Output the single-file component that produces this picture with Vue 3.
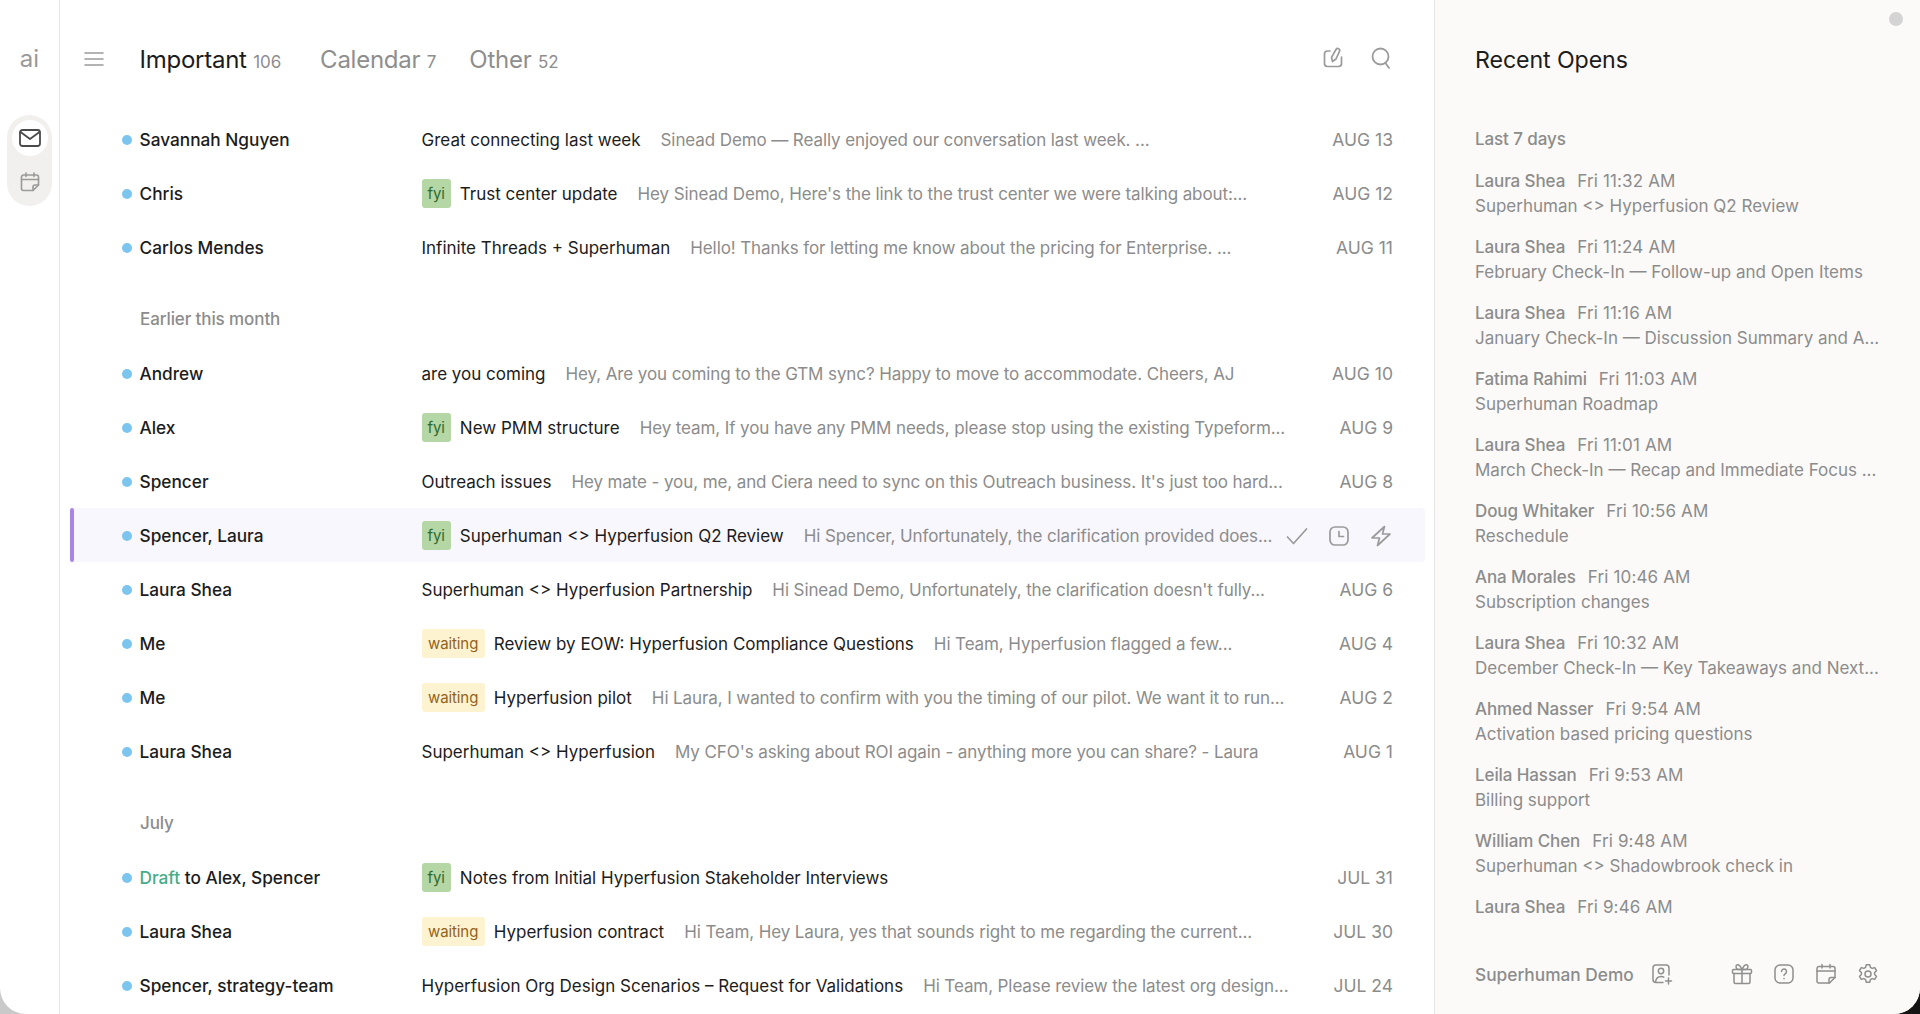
<script setup>
const tabs = [
  { label: 'Important', count: 106, active: true },
  { label: 'Calendar', count: 7 },
  { label: 'Other', count: 52 },
]

const groups = [
  {
    rows: [
      { from: 'Savannah Nguyen', subject: 'Great connecting last week', preview: 'Sinead Demo — Really enjoyed our conversation last week. ...', date: 'AUG 13' },
      { from: 'Chris', tag: 'fyi', subject: 'Trust center update', preview: "Hey Sinead Demo, Here's the link to the trust center we were talking about:...", date: 'AUG 12' },
      { from: 'Carlos Mendes', subject: 'Infinite Threads + Superhuman', preview: 'Hello! Thanks for letting me know about the pricing for Enterprise. ...', date: 'AUG 11' },
    ],
  },
  {
    title: 'Earlier this month',
    rows: [
      { from: 'Andrew', subject: 'are you coming', preview: 'Hey, Are you coming to the GTM sync? Happy to move to accommodate. Cheers, AJ', date: 'AUG 10' },
      { from: 'Alex', tag: 'fyi', subject: 'New PMM structure', preview: 'Hey team, If you have any PMM needs, please stop using the existing Typeform...', date: 'AUG 9' },
      { from: 'Spencer', subject: 'Outreach issues', preview: "Hey mate - you, me, and Ciera need to sync on this Outreach business. It's just too hard...", date: 'AUG 8' },
      { from: 'Spencer, Laura', tag: 'fyi', subject: 'Superhuman <> Hyperfusion Q2 Review', preview: 'Hi Spencer, Unfortunately, the clarification provided does...', selected: true },
      { from: 'Laura Shea', subject: 'Superhuman <> Hyperfusion Partnership', preview: "Hi Sinead Demo, Unfortunately, the clarification doesn't fully...", date: 'AUG 6' },
      { from: 'Me', tag: 'waiting', subject: 'Review by EOW: Hyperfusion Compliance Questions', preview: 'Hi Team, Hyperfusion flagged a few...', date: 'AUG 4' },
      { from: 'Me', tag: 'waiting', subject: 'Hyperfusion pilot', preview: 'Hi Laura, I wanted to confirm with you the timing of our pilot. We want it to run...', date: 'AUG 2' },
      { from: 'Laura Shea', subject: 'Superhuman <> Hyperfusion', preview: "My CFO's asking about ROI again - anything more you can share? - Laura", date: 'AUG 1' },
    ],
  },
  {
    title: 'July',
    rows: [
      { draft: true, from: 'to Alex, Spencer', tag: 'fyi', subject: 'Notes from Initial Hyperfusion Stakeholder Interviews', preview: '', date: 'JUL 31' },
      { from: 'Laura Shea', tag: 'waiting', subject: 'Hyperfusion contract', preview: 'Hi Team, Hey Laura, yes that sounds right to me regarding the current...', date: 'JUL 30' },
      { from: 'Spencer, strategy-team', subject: 'Hyperfusion Org Design Scenarios – Request for Validations', preview: 'Hi Team, Please review the latest org design...', date: 'JUL 24' },
    ],
  },
]

const opens = [
  { name: 'Laura Shea', time: 'Fri 11:32 AM', subject: 'Superhuman <> Hyperfusion Q2 Review' },
  { name: 'Laura Shea', time: 'Fri 11:24 AM', subject: 'February Check-In — Follow-up and Open Items' },
  { name: 'Laura Shea', time: 'Fri 11:16 AM', subject: 'January Check-In — Discussion Summary and A...' },
  { name: 'Fatima Rahimi', time: 'Fri 11:03 AM', subject: 'Superhuman Roadmap' },
  { name: 'Laura Shea', time: 'Fri 11:01 AM', subject: 'March Check-In — Recap and Immediate Focus ...' },
  { name: 'Doug Whitaker', time: 'Fri 10:56 AM', subject: 'Reschedule' },
  { name: 'Ana Morales', time: 'Fri 10:46 AM', subject: 'Subscription changes' },
  { name: 'Laura Shea', time: 'Fri 10:32 AM', subject: 'December Check-In — Key Takeaways and Next...' },
  { name: 'Ahmed Nasser', time: 'Fri 9:54 AM', subject: 'Activation based pricing questions' },
  { name: 'Leila Hassan', time: 'Fri 9:53 AM', subject: 'Billing support' },
  { name: 'William Chen', time: 'Fri 9:48 AM', subject: 'Superhuman <> Shadowbrook check in' },
  { name: 'Laura Shea', time: 'Fri 9:46 AM', subject: '' },
]
</script>

<template>
  <div class="app">
    <aside class="rail">
      <div class="logo">ai</div>
      <div class="switcher">
        <div class="switch-btn on">
          <svg width="22" height="18" viewBox="0 0 22 18" fill="none" stroke="#4a4a4a" stroke-width="1.800" stroke-linejoin="round" stroke-linecap="round">
            <rect x="1" y="1" width="20" height="16" rx="2.500" />
            <path d="M1.500 3l9.500 7 9.500-7" />
          </svg>
        </div>
        <div class="switch-btn">
          <svg width="20" height="20" viewBox="0 0 20 20" fill="none" stroke="#9a9a98" stroke-width="1.600" stroke-linejoin="round" stroke-linecap="round">
            <path d="M3.500 3h13a2 2 0 0 1 2 2v8l-5.500 5.500H3.500a2 2 0 0 1-2-2V5a2 2 0 0 1 2-2z" />
            <path d="M1.500 7.500h17M6 1v3.500M14 1v3.500M18.500 13H15a2 2 0 0 0-2 2v3.500" />
          </svg>
        </div>
      </div>
    </aside>

    <main class="inbox">
      <header class="head">
        <svg class="menu" width="20" height="14" viewBox="0 0 20 14" fill="none" stroke="#9b9b9b" stroke-width="1.600" stroke-linecap="round">
          <path d="M1 1h18M1 7h18M1 13h18" />
        </svg>
        <nav class="tabs">
          <span v-for="t in tabs" :key="t.label" class="tab" :class="{ active: t.active }">
            {{ t.label }} <small>{{ t.count }}</small>
          </span>
        </nav>
        <div class="head-icons">
          <svg width="24" height="24" viewBox="0 0 24 24" fill="none" stroke="#9b9b9b" stroke-width="1.700" stroke-linejoin="round" stroke-linecap="round">
            <path d="M9 5H6.500a3 3 0 0 0-3 3v9.500a3 3 0 0 0 3 3h11a3 3 0 0 0 3-3V11" />
            <path d="M15 3.500a2 2 0 0 1 3.600 1.700L15 13l-3.500 2.500-1-4.200z" />
          </svg>
          <svg width="24" height="24" viewBox="0 0 24 24" fill="none" stroke="#9b9b9b" stroke-width="1.800" stroke-linecap="round">
            <circle cx="11.500" cy="10.500" r="8" />
            <path d="M16.500 17l3.500 5" />
          </svg>
        </div>
      </header>

      <section v-for="(g, i) in groups" :key="i" class="group">
        <h4 v-if="g.title" class="group-title">{{ g.title }}</h4>
        <div v-for="r in g.rows" :key="r.subject" class="row" :class="{ selected: r.selected }">
          <span class="dot" />
          <span class="from"><em v-if="r.draft">Draft</em>{{ r.draft ? ' ' : '' }}{{ r.from }}</span>
          <span class="line">
            <span v-if="r.tag" class="tag" :class="r.tag">{{ r.tag }}</span>
            <span class="subject">{{ r.subject }}</span>
            <span class="preview">{{ r.preview }}</span>
          </span>
          <span v-if="r.date" class="date">{{ r.date }}</span>
          <span v-else class="actions">
            <svg width="24" height="24" viewBox="0 0 24 24" fill="none" stroke="#9b9b9b" stroke-width="1.700" stroke-linecap="round" stroke-linejoin="round">
              <path d="M2.500 13l6 6.500L21.500 5" />
            </svg>
            <svg width="24" height="24" viewBox="0 0 24 24" fill="none" stroke="#9b9b9b" stroke-width="1.700" stroke-linecap="round" stroke-linejoin="round">
              <rect x="3" y="3" width="18" height="18" rx="5" />
              <path d="M12 7.500V12.500h4.500" />
            </svg>
            <svg width="24" height="24" viewBox="0 0 24 24" fill="none" stroke="#9b9b9b" stroke-width="1.700" stroke-linecap="round" stroke-linejoin="round">
              <path d="M15.500 2.500L3 14h7.500l-2 7.500L21 10h-7.500z" />
            </svg>
          </span>
        </div>
      </section>
    </main>

    <aside class="opens">
      <span class="grip" />
      <h2 class="opens-title">Recent Opens</h2>
      <h4 class="opens-group">Last 7 days</h4>
      <div class="opens-list">
        <div v-for="o in opens" :key="o.time" class="open">
          <div class="who"><b>{{ o.name }}</b><span>{{ o.time }}</span></div>
          <div class="what">{{ o.subject }}</div>
        </div>
      </div>
      <footer class="foot">
        <span class="account">Superhuman Demo</span>
        <svg width="22" height="22" viewBox="0 0 22 22" fill="none" stroke="#8f8f8f" stroke-width="1.500" stroke-linecap="round" stroke-linejoin="round">
          <path d="M12 19.500H5a3 3 0 0 1-3-3V5a3 3 0 0 1 3-3h10a3 3 0 0 1 3 3v7" />
          <circle cx="10" cy="8" r="2.700" />
          <path d="M4.500 19c.5-3.500 2.500-5.500 5.500-5.500 1 0 2 .2 2.800.7M17.500 15v6M14.500 18h6" />
        </svg>
        <span class="foot-icons">
          <svg width="22" height="22" viewBox="0 0 22 22" fill="none" stroke="#8f8f8f" stroke-width="1.500" stroke-linecap="round" stroke-linejoin="round">
            <rect x="1.500" y="6.500" width="19" height="4" rx="1" />
            <path d="M3 10.500V19a1.500 1.500 0 0 0 1.500 1.500h13A1.500 1.500 0 0 0 19 19v-8.500M11 6.500v14M11 6.500C9 2 7.500 1.500 6.300 1.700c-1.800.4-1.800 4.300.7 4.800zM11 6.500c2-4.500 3.500-5 4.700-4.800 1.800.4 1.800 4.300-.7 4.800z" />
          </svg>
          <svg width="22" height="22" viewBox="0 0 22 22" fill="none" stroke="#8f8f8f" stroke-width="1.500" stroke-linecap="round" stroke-linejoin="round">
            <rect x="2" y="2" width="18" height="18" rx="5" />
            <path d="M8.500 8.500a2.500 2.500 0 1 1 3.800 2.100c-.8.500-1.300 1-1.300 2M11 15.500v.2" />
          </svg>
          <svg width="22" height="22" viewBox="0 0 22 22" fill="none" stroke="#8f8f8f" stroke-width="1.500" stroke-linecap="round" stroke-linejoin="round">
            <path d="M4 3.500h14a2 2 0 0 1 2 2v9l-5.500 5.500H4a2 2 0 0 1-2-2V5.500a2 2 0 0 1 2-2z" />
            <path d="M2 8h18M7 1.500v3.500M15 1.500v3.500M20 14.500h-4a2 2 0 0 0-2 2V20" />
          </svg>
          <svg width="22" height="22" viewBox="0 0 22 22" fill="none" stroke="#8f8f8f" stroke-width="1.500" stroke-linecap="round" stroke-linejoin="round">
            <circle cx="11" cy="11" r="3" />
            <path d="M9.200 1.800h3.600l.6 2.600 1.800 1 2.500-.8 1.800 3.100-1.900 1.800v2l1.900 1.800-1.800 3.100-2.500-.8-1.800 1-.6 2.600H9.200l-.6-2.600-1.800-1-2.500.8-1.800-3.100 1.900-1.800v-2L2.500 7.700l1.800-3.100 2.500.8 1.800-1z" />
          </svg>
        </span>
      </footer>
    </aside>
  </div>
</template>

<style>
html, body {
  margin: 0;
  background: linear-gradient(90deg, #c9c9c9 50%, #141414 50%);
}
</style>

<style scoped>
.app {
  display: flex;
  width: 1920px;
  height: 1014px;
  overflow: hidden;
  border-radius: 0 0 26px 26px;
  background: #fff;
  font-family: Inter, "Liberation Sans", sans-serif;
  color: #1c1c1c;
}

.rail {
  flex: 0 0 59px;
  border-right: 1px solid #e6e6e6;
  display: flex;
  flex-direction: column;
  align-items: center;
}

.logo {
  margin-top: 44px;
  font-size: 24px;
  line-height: 30px;
  color: #9a9a9a;
  font-weight: 400;
}

.switcher {
  margin-top: 41px;
  width: 45px;
  height: 91px;
  box-sizing: border-box;
  padding: 5px 0;
  border-radius: 23px;
  background: #f1f0ee;
  display: flex;
  flex-direction: column;
  align-items: center;
  gap: 8px;
}

.switch-btn {
  width: 36px;
  height: 36px;
  border-radius: 50%;
  display: flex;
  align-items: center;
  justify-content: center;
}
.switch-btn.on { background: #fff; }

.inbox {
  flex: 0 0 1375px;
  box-sizing: border-box;
  border-right: 1px solid #e6e6e6;
  padding: 0 9px 0 10px;
  overflow: hidden;
}

.head {
  height: 112px;
  padding: 6px 32px 0 14px;
  box-sizing: border-box;
  display: flex;
  align-items: center;
}

.tabs {
  margin-left: 35.500px;
  display: flex;
  gap: 33px;
  flex: 1;
}

.tab {
  font-size: 24px;
  color: #8e8e8e;
  letter-spacing: -0.25px;
}
.tab small { font-size: 17px; letter-spacing: -0.1px; }
.tab.active { color: #1c1c1c; margin-right: 6px; }
.tab.active small { color: #8e8e8e; }

.head-icons {
  display: flex;
  gap: 24px;
  margin-top: -2px;
}

.group + .group { margin-top: 22px; }

.group-title {
  margin: 0 0 0 70px;
  height: 50px;
  line-height: 46px;
  font-size: 17px;
  font-weight: 500;
  color: #8c8c8c;
  letter-spacing: -0.1px;
}

.row {
  height: 54px;
  box-sizing: border-box;
  padding: 1px 32px 0 51.500px;
  display: flex;
  align-items: center;
  font-size: 17px;
  letter-spacing: -0.1px;
  border-radius: 4px;
  position: relative;
}

.row.selected { background: #f8f7fe; }
.row.selected::before {
  content: '';
  position: absolute;
  left: 0;
  top: 0;
  bottom: 0;
  width: 4px;
  border-radius: 2px;
  background: #a986e4;
}

.dot {
  flex: none;
  width: 10px;
  height: 10px;
  border-radius: 50%;
  background: #7cc5ee;
  margin-right: 8px;
}

.from {
  flex: 0 0 282px;
  font-size: 17.250px;
  letter-spacing: 0;
  font-weight: 500;
  white-space: nowrap;
}
.from em {
  font-style: normal;
  color: #45ac8b;
}

.line {
  flex: 1;
  min-width: 0;
  display: flex;
  align-items: center;
  white-space: nowrap;
}

.tag {
  flex: none;
  height: 29px;
  line-height: 29px;
  box-sizing: border-box;
  padding: 0 6px;
  margin-right: 9px;
  border-radius: 3px;
  font-size: 15px;
}
.tag.fyi { background: #b5d6a5; color: #2f6b2c; }
.tag.waiting { background: #fdf3d0; color: #94611b; padding: 0 6.500px; }

.subject {
  flex: none;
  font-size: 17px;
  letter-spacing: 0;
}
.preview {
  margin-left: 20px;
  color: #8c8c8c;
}

.date {
  flex: none;
  color: #8c8c8c;
  font-size: 17.500px;
  letter-spacing: 0;
}

.actions {
  flex: none;
  display: flex;
  gap: 18px;
}

.opens {
  flex: 1;
  min-width: 0;
  background: #fbfaf9;
  box-sizing: border-box;
  padding: 0 36px 0 40px;
  display: flex;
  flex-direction: column;
  position: relative;
  font-size: 17px;
  letter-spacing: -0.1px;
  color: #8c8c8c;
}

.grip {
  position: absolute;
  top: 12px;
  right: 17px;
  width: 14px;
  height: 14px;
  border-radius: 50%;
  background: #d4d4d4;
}

.opens-title {
  margin: 0;
  padding-top: 45px;
  font-size: 23.200px;
  line-height: 30px;
  font-weight: 400;
  color: #1c1c1c;
}

.opens-group {
  margin: 49px 0 0;
  line-height: 30px;
  font-size: 17px;
  font-weight: 500;
}

.opens-list { margin-top: 14px; flex: 1; }

.open { height: 66px; padding-top: 1px; box-sizing: border-box; }

.who { line-height: 25px; white-space: nowrap; }
.who b { font-weight: 500; }
.who span { margin-left: 12px; letter-spacing: 0.150px; }

.what {
  line-height: 25px;
  white-space: nowrap;
  letter-spacing: 0;
}

.foot {
  height: 76px;
  padding-bottom: 26px;
  padding-right: 6px;
  box-sizing: border-box;
  display: flex;
  align-items: center;
  gap: 17px;
}
.account { font-weight: 500; font-size: 17.300px; letter-spacing: 0; }
.foot-icons {
  margin-left: auto;
  margin-right: -1px;
  display: flex;
  gap: 20px;
}
svg { display: block; flex: none; }
</style>
